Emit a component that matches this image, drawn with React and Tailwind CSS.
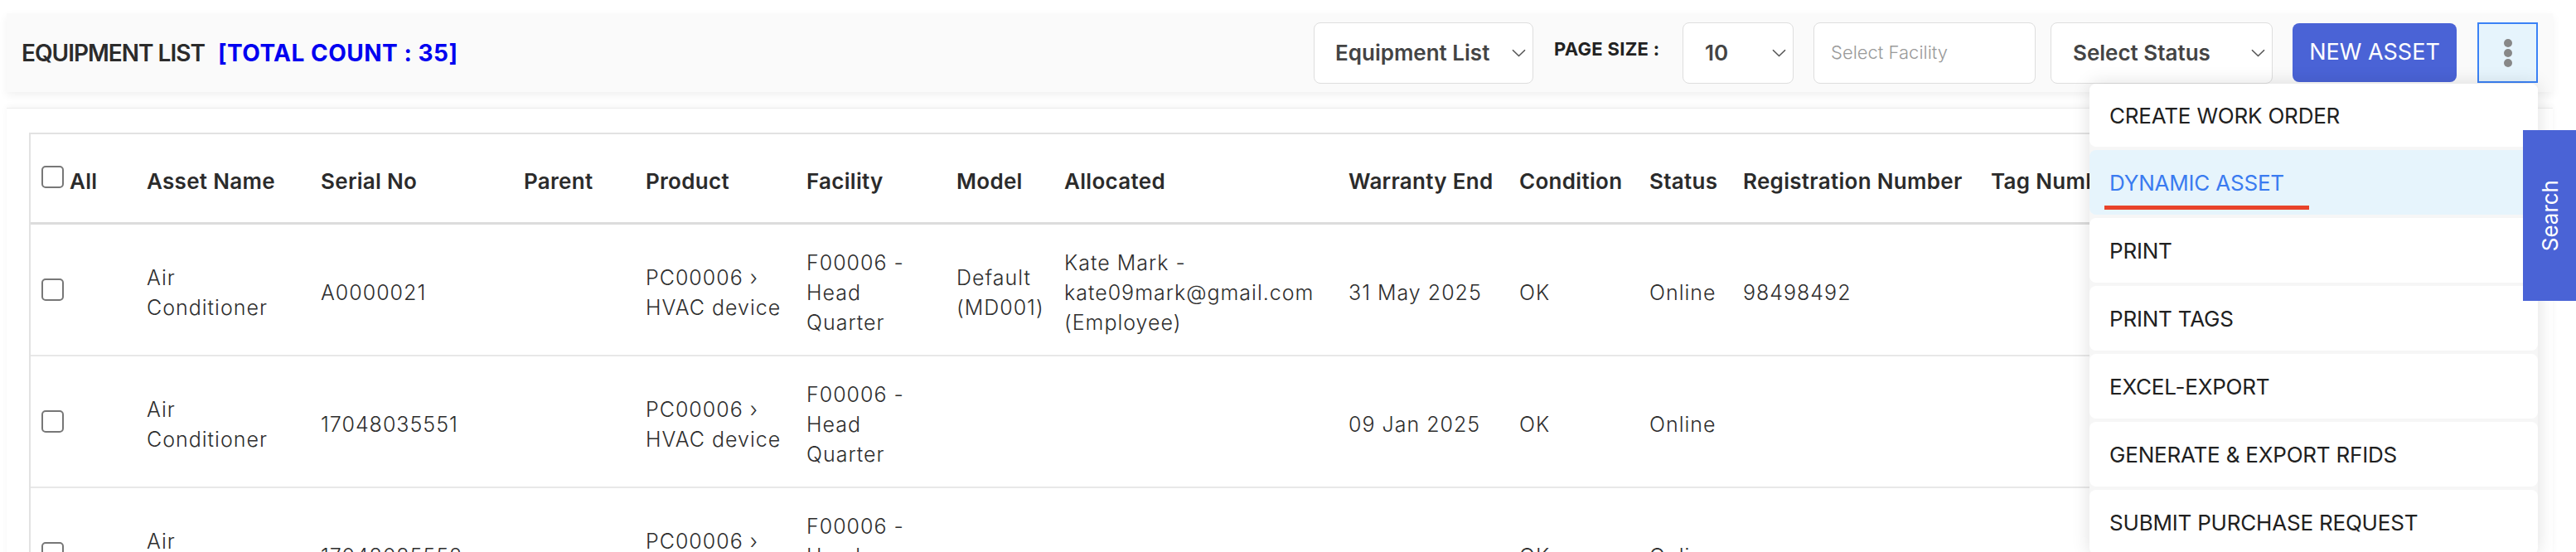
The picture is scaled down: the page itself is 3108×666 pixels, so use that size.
import React from "react";

const Chevron = () => (
  <svg width="17" height="10" viewBox="0 0 17 10" fill="none">
    <path d="M1 1.2L8.5 8.5L16 1.2" stroke="#555" strokeWidth="1.6" />
  </svg>
);

const Box = ({ className = "" }) => (
  <div className={"w-[27px] h-[27px] shrink-0 rounded-[5px] border-2 border-[#777] bg-white " + className} />
);

const colW = [
  "w-[124px]",
  "w-[210px]",
  "w-[245px]",
  "w-[147px]",
  "w-[194px]",
  "w-[181px]",
  "w-[130px]",
  "w-[343px]",
  "w-[206px]",
  "w-[157px]",
  "w-[113px]",
  "w-[299px]",
  "w-[330px]",
  "w-[300px]",
];

const headers = [
  null,
  "Asset Name",
  "Serial No",
  "Parent",
  "Product",
  "Facility",
  "Model",
  "Allocated",
  "Warranty End",
  "Condition",
  "Status",
  "Registration Number",
  "Tag Number",
  "Location",
];

const rows = [
  [
    ["Air", "Conditioner"],
    ["A0000021"],
    [],
    ["PC00006 ›", "HVAC device"],
    ["F00006 -", "Head", "Quarter"],
    ["Default", "(MD001)"],
    ["Kate Mark -", "kate09mark@gmail.com", "(Employee)"],
    ["31 May 2025"],
    ["OK"],
    ["Online"],
    ["98498492"],
    [],
    [],
  ],
  [
    ["Air", "Conditioner"],
    ["17048035551"],
    [],
    ["PC00006 ›", "HVAC device"],
    ["F00006 -", "Head", "Quarter"],
    [],
    [],
    ["09 Jan 2025"],
    ["OK"],
    ["Online"],
    [],
    [],
    [],
  ],
  [
    ["Air", "Conditioner"],
    ["17048035552"],
    [],
    ["PC00006 ›", "HVAC device"],
    ["F00006 -", "Head", "Quarter"],
    [],
    [],
    [],
    ["OK"],
    ["Online"],
    [],
    [],
    [],
  ],
];

const menuItems = [
  "CREATE WORK ORDER",
  "DYNAMIC ASSET",
  "PRINT",
  "PRINT TAGS",
  "EXCEL-EXPORT",
  "GENERATE & EXPORT RFIDS",
  "SUBMIT PURCHASE REQUEST",
];

export default function App() {
  return (
    <div
      className="relative w-[3108px] h-[666px] overflow-hidden bg-white"
      style={{ fontFamily: "Inter, 'Open Sans', sans-serif" }}
    >
      {/* Header bar */}
      <div className="ml-[8px] mt-[16px] w-[3072px] h-[95px] bg-[#fafafa] shadow-[0_4px_10px_rgba(0,0,0,0.06)] flex items-center pl-[18px] pr-[18px]">
        <div className="flex items-center text-[28px] whitespace-nowrap">
          <span className="font-semibold text-[#2b2b2b] tracking-[-1px]">EQUIPMENT LIST</span>
          <span className="ml-[16px] font-bold text-[#0000f0] tracking-[0.5px]">[TOTAL COUNT : 35]</span>
        </div>
        <div className="ml-auto flex items-center">
          <div className="w-[265px] h-[74px] rounded-[8px] border border-[#dedede] bg-white flex items-center justify-between pl-[25px] pr-[8px]">
            <span className="text-[26px] font-semibold text-[#444]">Equipment List</span>
            <Chevron />
          </div>
          <div className="ml-[25px] w-[126px] mb-[8px] text-[22px] font-bold text-[#222] whitespace-nowrap tracking-[0.3px]">
            PAGE SIZE :
          </div>
          <div className="ml-[29px] w-[134px] h-[74px] rounded-[8px] border border-[#dedede] bg-white flex items-center justify-between pl-[26px] pr-[8px]">
            <span className="text-[26px] font-semibold text-[#444]">10</span>
            <Chevron />
          </div>
          <div className="ml-[24px] w-[268px] h-[74px] rounded-[8px] border border-[#dedede] bg-white flex items-center pl-[20px]">
            <span className="text-[22px] font-light text-[#9a9a9a]">Select Facility</span>
          </div>
          <div className="ml-[18px] w-[268px] h-[74px] rounded-[8px] border border-[#dedede] bg-white flex items-center justify-between pl-[26px] pr-[8px]">
            <span className="text-[26px] font-semibold text-[#444]">Select Status</span>
            <Chevron />
          </div>
          <button className="ml-[24px] w-[198px] h-[71px] rounded-[8px] bg-[#4a63d6] text-white text-[27px] font-normal flex items-center justify-center">
            NEW ASSET
          </button>
          <div className="relative ml-[25px]">
            <div className="w-[73px] h-[73px] bg-[#e6f4fc] border-2 border-[#3b82f6] flex flex-col items-center justify-center gap-[2px]">
              <span className="w-[10px] h-[10px] rounded-full bg-[#888]" />
              <span className="w-[10px] h-[10px] rounded-full bg-[#888]" />
              <span className="w-[10px] h-[10px] rounded-full bg-[#888]" />
            </div>
            {/* Dropdown menu */}
            <div className="absolute right-0 top-[calc(100%+1px)] z-10 w-[541px] bg-[#f6f6f6] rounded-[8px] shadow-[0_0_22px_rgba(0,0,0,0.13)] flex flex-col gap-[4px]">
              {menuItems.map((m, i) => (
                <div
                  key={m}
                  className={
                    "relative rounded-[8px] flex items-center pl-[24px] text-[26px] tracking-[-0.2px] whitespace-nowrap " +
                    (i === 0 ? "h-[76px] " : "h-[78px] ") +
                    (i === 1 ? "bg-[#e6f4fc] text-[#3a7bf0]" : "bg-white text-[#202020]")
                  }
                >
                  {m}
                  {i === 1 && (
                    <span className="absolute left-[18px] top-[67px] w-[247px] h-[5px] bg-[#e8432a]" />
                  )}
                </div>
              ))}
            </div>
          </div>
        </div>
      </div>

      {/* Table card */}
      <div className="ml-[8px] mt-[19px] w-[3072px] bg-white border-t border-[#ececec] shadow-[0_-2px_8px_rgba(0,0,0,0.04)] pt-[29px] pl-[27px] overflow-hidden">
        <div className="border-l-2 border-t-2 border-[#e2e2e2] w-max">
          {/* header */}
          <div className="flex h-[109px] pt-[6px] border-b-[3px] border-[#dcdcdc] text-[26px] font-semibold text-[#2b2b2b] tracking-[0.3px]">
            {headers.map((h, i) => (
              <div
                key={i}
                className={colW[i] + " shrink-0 flex items-center whitespace-nowrap " + (i === 0 ? "pl-[13px]" : "pl-[16px]")}
              >
                {i === 0 ? (
                  <>
                    <Box className="mb-[10px]" />
                    <span className="ml-[7px]">All</span>
                  </>
                ) : (
                  h
                )}
              </div>
            ))}
          </div>
          {/* body */}
          {rows.map((r, ri) => (
            <div
              key={ri}
              className="flex h-[159px] border-b-2 border-[#e8e8e8] text-[25px] leading-[36px] font-light text-[#2e2e2e] tracking-[1px]"
            >
              <div className={colW[0] + " shrink-0 flex items-center pl-[13px]"}>
                <Box />
              </div>
              {r.map((lines, ci) => (
                <div
                  key={ci}
                  className={colW[ci + 1] + " shrink-0 flex flex-col justify-center pt-[6px] pl-[16px] whitespace-nowrap"}
                >
                  {lines.map((l, li) => (
                    <span key={li}>{l}</span>
                  ))}
                </div>
              ))}
            </div>
          ))}
        </div>
      </div>

      {/* Search side tab */}
      <div className="absolute right-0 top-[157px] z-20 w-[64px] h-[206px] bg-[#4a63d6] flex items-center justify-center">
        <span className="text-white text-[26px] [writing-mode:vertical-rl] rotate-180">Search</span>
      </div>
    </div>
  );
}
